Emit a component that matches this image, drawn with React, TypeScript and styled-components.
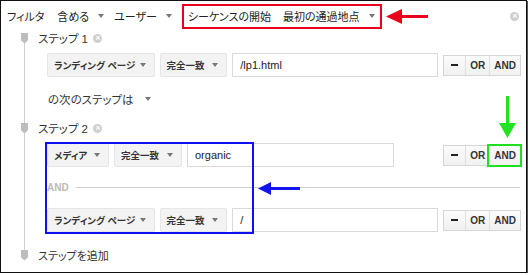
import React from "react";
import styled, { createGlobalStyle, css } from "styled-components";

const GlobalStyle = createGlobalStyle`
  html, body {
    margin: 0;
    padding: 0;
    background: #fff;
  }
  body {
    font-family: "Liberation Sans", "Noto Sans CJK JP", sans-serif;
    font-feature-settings: "palt";
    color: #333;
  }
`;

type Condition = {
  dimension: string;
  dimensionWidth: number;
  match: string;
  value: string;
  inputWidth: number;
  highlightAnd?: boolean;
};

const step2: Condition[] = [
  { dimension: "メディア", dimensionWidth: 62, match: "完全一致", value: "organic", inputWidth: 207, highlightAnd: true },
  { dimension: "ランディング ページ", dimensionWidth: 108, match: "完全一致", value: "/", inputWidth: 207 },
];

const ConditionRow: React.FC<{ c: Condition }> = ({ c }) => (
  <Row>
    <Select style={{ width: c.dimensionWidth }}>
      <span>{c.dimension}</span>
      <Caret />
    </Select>
    <Select style={{ width: 68 }}>
      <span>{c.match}</span>
      <Caret />
    </Select>
    <TextInput style={{ width: c.inputWidth }}>{c.value}</TextInput>
    <ButtonGroup>
      <SegButton>
        <Dash />
      </SegButton>
      <SegButton>OR</SegButton>
      <SegButton highlight={c.highlightAnd}>AND</SegButton>
    </ButtonGroup>
  </Row>
);

const App: React.FC = () => {
  return (
    <>
      <GlobalStyle />
      <Frame>
        <TopBar>
          <FilterLabel>フィルタ</FilterLabel>
          <Menu>
            含める
            <Caret />
          </Menu>
          <Menu>
            ユーザー
            <Caret />
          </Menu>
          <SequenceMenu>
            <span>シーケンスの開始</span>
            <span>最初の通過地点</span>
            <Caret />
          </SequenceMenu>
          <CloseIcon size={9} />
        </TopBar>

        <Steps>
          <StepHeader>
            <Marker />
            <span>ステップ 1</span>
            <CloseIcon size={9} />
          </StepHeader>
          <ConditionRow
            c={{ dimension: "ランディング ページ", dimensionWidth: 108, match: "完全一致", value: "/lp1.html", inputWidth: 207 }}
          />
          <NextStep>
            の次のステップは
            <Caret />
          </NextStep>
          <StepHeader gap={15}>
            <Marker />
            <span>ステップ 2</span>
            <CloseIcon size={9} />
          </StepHeader>
          <ConditionRow c={step2[0]} />
          <AndSeparator>
            <span>AND</span>
            <Rule />
          </AndSeparator>
          <ConditionRow c={step2[1]} />
          <StepHeader gap={16} last>
            <Marker />
            <span>ステップを追加</span>
          </StepHeader>
        </Steps>

        <BlueBox />
        <Arrow style={{ left: 383, top: 6 }} width={46} height={19} viewBox="0 0 46 19">
          <polygon points="2,9.5 18,2 18,17" fill="#e8001c" />
          <rect x="16" y="8" width="28" height="3" fill="#e8001c" />
        </Arrow>
        <Arrow style={{ left: 496, top: 94 }} width={21} height={44} viewBox="0 0 21 44">
          <rect x="9" y="1" width="3" height="30" fill="#22e322" />
          <polygon points="2,28 19,28 10.5,43" fill="#22e322" />
        </Arrow>
        <Arrow style={{ left: 255, top: 179 }} width={46} height={17} viewBox="0 0 46 17">
          <polygon points="2,8.5 15,2 15,15" fill="#1414f0" />
          <rect x="13" y="7" width="31" height="3" fill="#1414f0" />
        </Arrow>
      </Frame>
    </>
  );
};

export default App;

const Frame = styled.div`
  position: relative;
  box-sizing: border-box;
  width: 527px;
  height: 273px;
  border: 1px solid #111;
  box-shadow: 1px 1px 0 #555;
  overflow: hidden;
`;

const TopBar = styled.div`
  display: flex;
  align-items: center;
  height: 30px;
  padding: 0 7px 0 6px;
  font-size: 11px;
  color: #222;
`;

const FilterLabel = styled.span`
  margin-right: 13px;
`;

const Menu = styled.span`
  display: flex;
  align-items: center;
  gap: 9px;
  margin-right: 10px;
`;

const SequenceMenu = styled.div`
  display: flex;
  align-items: center;
  box-sizing: border-box;
  height: 25px;
  padding: 0 5px 0 4px;
  border: 2px solid #e8001c;
  gap: 12px;

  & > i {
    margin-left: -3px;
  }
`;

const Caret = styled.i`
  display: inline-block;
  width: 0;
  height: 0;
  border-left: 3px solid transparent;
  border-right: 3px solid transparent;
  border-top: 4px solid #777;
  flex: none;
`;

const CloseIcon = styled.i<{ size: number }>(
  ({ size }) => css`
    position: relative;
    display: inline-block;
    flex: none;
    width: ${size}px;
    height: ${size}px;
    border-radius: 50%;
    background: #cfcfcf;
    margin-left: auto;

    &::before,
    &::after {
      content: "";
      position: absolute;
      left: 50%;
      top: 50%;
      width: ${size - 4}px;
      height: 1.3px;
      background: #fff;
      transform: translate(-50%, -50%) rotate(45deg);
    }
    &::after {
      transform: translate(-50%, -50%) rotate(-45deg);
    }
  `
);

const Steps = styled.div`
  position: relative;
  display: flex;
  flex-direction: column;

  &::before {
    content: "";
    position: absolute;
    left: 23px;
    top: 6px;
    bottom: 8px;
    width: 1px;
    background: #cfcfcf;
  }
`;

const StepHeader = styled.div<{ gap?: number; last?: boolean }>(
  ({ gap = 0, last }) => css`
    position: relative;
    display: flex;
    align-items: center;
    height: 14px;
    margin-top: ${gap}px;
    padding-left: 20px;
    font-size: 11.5px;
    color: #333;

    & > i:last-child {
      margin-left: 5px;
    }
    ${last &&
    css`
      font-size: 11px;
    `}
  `
);

const Marker = styled.i`
  display: inline-block;
  width: 7px;
  height: 11px;
  background: #bdbdbd;
  clip-path: polygon(0 0, 100% 0, 100% 70%, 50% 100%, 0 70%);
  margin-right: 10px;
  flex: none;
`;

const Row = styled.div`
  display: flex;
  align-items: center;
  gap: 5px;
  height: 24px;
  margin-top: 8px;
  padding: 0 5px 0 46px;

  & + & {
    margin-top: 14px;
  }
`;

const Select = styled.div`
  display: flex;
  align-items: center;
  justify-content: space-between;
  box-sizing: border-box;
  height: 24px;
  padding: 0 8px 0 6px;
  background: #f3f3f3;
  border: 1px solid #e6e6e6;
  border-radius: 2px;
  font-size: 9.5px;
  font-weight: bold;
  color: #333;
  white-space: nowrap;
`;

const TextInput = styled.div`
  display: flex;
  align-items: center;
  box-sizing: border-box;
  height: 24px;
  padding: 0 7px;
  background: #fff;
  border: 1px solid #d9d9d9;
  font-size: 11px;
  color: #222;
`;

const ButtonGroup = styled.div`
  display: flex;
  margin-left: auto;
  height: 21px;
  border: 1px solid #d6d6d6;
  box-sizing: border-box;
`;

const SegButton = styled.div<{ highlight?: boolean }>(
  ({ highlight }) => css`
    display: flex;
    align-items: center;
    justify-content: center;
    padding: 0 4px;
    min-width: 12px;
    background: linear-gradient(#fbfbfb, #f1f1f1);
    font-size: 10px;
    font-weight: bold;
    color: #333;

    & + & {
      border-left: 1px solid #e0e0e0;
    }
    &:first-child {
      width: 13px;
    }
    ${highlight &&
    css`
      outline: 2px solid #1fe01f;
      outline-offset: 0px;
      position: relative;
    `}
  `
);

const Dash = styled.i`
  display: block;
  width: 7px;
  height: 2px;
  background: #222;
`;

const NextStep = styled.div`
  display: flex;
  align-items: center;
  gap: 11px;
  height: 14px;
  margin-top: 15px;
  padding-left: 47px;
  font-size: 11.5px;
  color: #333;
`;

const AndSeparator = styled.div`
  display: flex;
  align-items: center;
  gap: 7px;
  height: 14px;
  margin-top: 13px;
  padding: 0 6px 0 46px;
  font-size: 10px;
  font-weight: bold;
  color: #bbb;

  & + ${Row} {
    margin-top: 14px;
  }
`;

const Rule = styled.div`
  flex: 1;
  height: 1px;
  background: #cfcfcf;
`;

const BlueBox = styled.div`
  position: absolute;
  left: 44px;
  top: 141px;
  width: 209px;
  height: 92px;
  box-sizing: border-box;
  border: 2.5px solid #1010f0;
  pointer-events: none;
`;

const Arrow = styled.svg`
  position: absolute;
  overflow: visible;
`;
